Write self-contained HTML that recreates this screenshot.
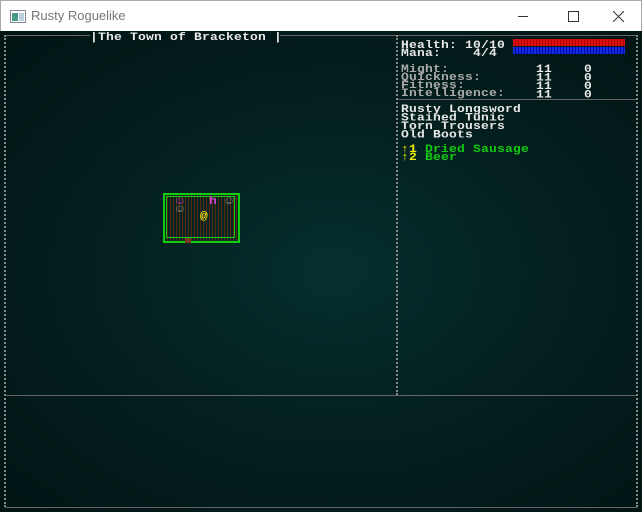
<!DOCTYPE html>
<html><head><style>
*{margin:0;padding:0}
body{width:642px;height:512px;overflow:hidden;background:#fff;position:relative;font-family:"Liberation Mono",monospace}
#tb{position:absolute;left:0;top:0;width:642px;height:31px;background:#fff;border:1px solid #aaa;border-bottom:none;box-sizing:border-box}
#tt{position:absolute;left:30px;top:7px;font:13px "Liberation Sans",sans-serif;color:#777}
#cl{position:absolute;left:0;top:31px;width:642px;height:481px;background:radial-gradient(ellipse at 52% 50%,#05302e 0%,#03201f 45%,#011414 100%)}
.t{position:absolute;font-family:"Liberation Mono",monospace;font-weight:bold;font-size:13px;letter-spacing:0.2px;line-height:10px;white-space:pre;color:#e8e8e8;transform:scaleY(0.85);transform-origin:0 0;margin-top:2px}
.v{position:absolute;width:0;border-left:2px dotted #888}
.h{position:absolute;height:0;border-top:1px solid #666}
</style></head><body>
<div id="tb">
<svg style="position:absolute;left:9px;top:9px" width="16" height="13"><rect x="0.5" y="0.5" width="15" height="12" fill="#fff" stroke="#889"/><rect x="2" y="3" width="6" height="8" fill="#4a9a8a"/><rect x="9" y="3" width="5" height="8" fill="#bcd"/></svg>
<div id="tt">Rusty Roguelike</div>
<div style="position:absolute;left:517px;top:15px;width:10px;height:1px;background:#333"></div>
<div style="position:absolute;left:567px;top:10px;width:9px;height:9px;border:1px solid #333"></div>
<svg style="position:absolute;left:612px;top:10px" width="11" height="11"><path d="M0 0L11 11M11 0L0 11" stroke="#333"/></svg>
</div>
<div id="cl">
<div class="h" style="left:5px;top:4px;width:632px"></div>
<div class="v" style="left:4px;top:4px;height:472px"></div>
<div class="v" style="left:636px;top:4px;height:472px"></div>
<div class="v" style="left:396px;top:4px;height:360px"></div>
<div class="h" style="left:5px;top:364px;width:632px"></div>
<div class="h" style="left:398px;top:68px;width:238px"></div>
<div class="h" style="left:5px;top:476px;width:632px"></div>
<div style="position:absolute;left:90px;top:0;width:190px;height:10px;background:#021818"></div>
<div class="t" style="left:90px;top:0px">|The Town of Bracketon |</div>
<div class="t" style="left:401px;top:8px">Health: 10/10</div>
<div class="t" style="left:401px;top:16px">Mana:    4/4</div>
<div style="position:absolute;left:513px;top:8px;width:112px;height:7px;background:repeating-linear-gradient(90deg,#e01010 0 2px,#a00 2px 3px)"></div>
<div style="position:absolute;left:513px;top:16px;width:112px;height:7px;background:repeating-linear-gradient(90deg,#1030e0 0 2px,#00a 2px 3px)"></div>
<div class="t" style="left:401px;top:32px;color:#aaa">Might:</div>
<div class="t" style="left:401px;top:40px;color:#aaa">Quickness:</div>
<div class="t" style="left:401px;top:48px;color:#aaa">Fitness:</div>
<div class="t" style="left:401px;top:56px;color:#aaa">Intelligence:</div>
<div class="t" style="left:536px;top:32px">11    0
11    0
11    0
11    0</div>
<div class="t" style="left:401px;top:72px">Rusty Longsword
Stained Tunic
Torn Trousers
Old Boots</div>
<div class="t" style="left:401px;top:112px;color:#ee0">↑1</div>
<div class="t" style="left:401px;top:120px;color:#ee0">↑2</div>
<div class="t" style="left:425px;top:112px;color:#1c1">Dried Sausage</div>
<div class="t" style="left:425px;top:120px;color:#1c1">Beer</div>
<div style="position:absolute;left:163px;top:162px;width:73px;height:46px;border:2px solid #1c1;background:repeating-linear-gradient(90deg,transparent 0 2px,#5a2a10 2px 3px)"></div>
<div style="position:absolute;left:166px;top:165px;width:67px;height:40px;border:1px solid #1c1"></div>
<div class="t" style="left:176px;top:164px;color:#c4c">☺</div>
<div class="t" style="left:209px;top:164px;color:#c4c">h</div>
<div class="t" style="left:225px;top:164px;color:#999">☺</div>
<div class="t" style="left:176px;top:172px;color:#999">☺</div>
<div class="t" style="left:200px;top:179px;color:#ee0">@</div>
<div style="position:absolute;left:185px;top:207px;width:6px;height:5px;background:#7a3a20"></div>
</div>
</body></html>
